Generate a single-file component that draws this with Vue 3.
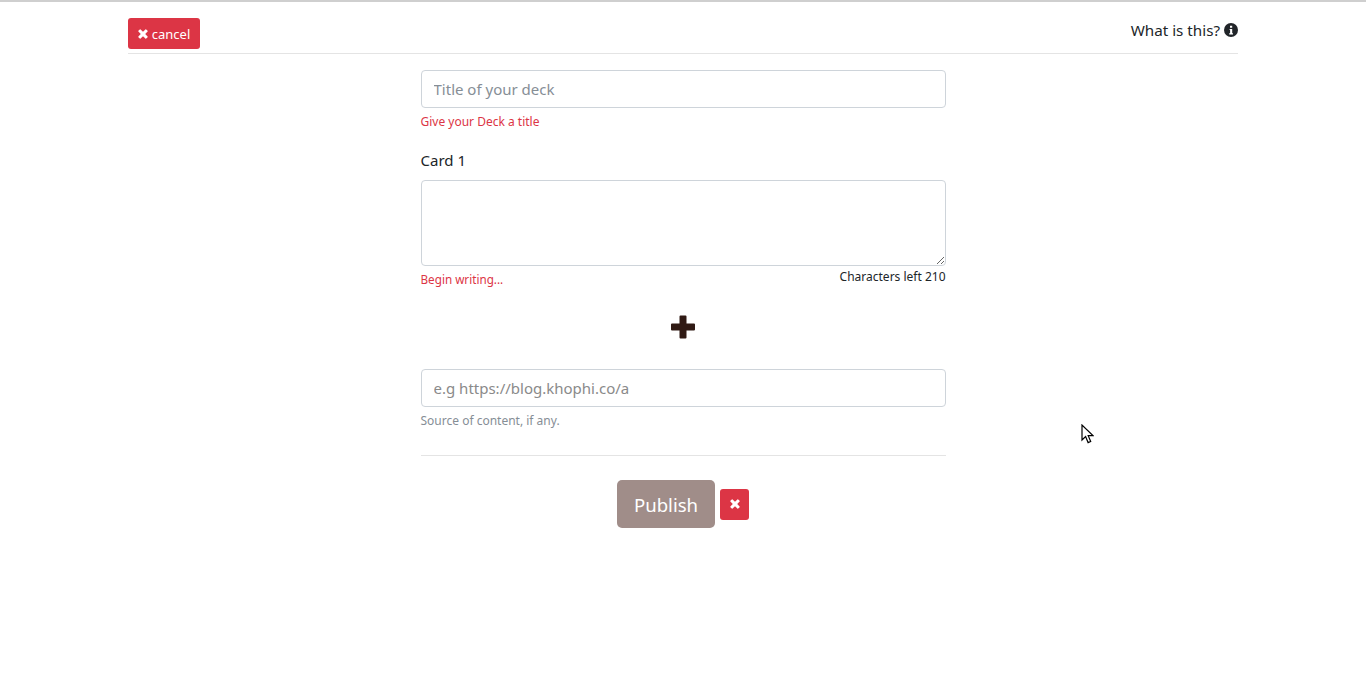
<script setup>
import { ref } from 'vue'

const title = ref('')
const card = ref('')
const source = ref('')
const maxChars = 210
</script>

<template>
  <div class="page">
    <div class="container">
      <header class="topbar">
        <button class="btn-cancel">
          <svg class="fa-x" viewBox="0 0 10 10"><path d="M2.600.4 5 2.800 7.400.4q.4-.4.800 0l1.400 1.400q.4.400 0 .8L7.200 5l2.400 2.400q.4.400 0 .8L8.200 9.600q-.4.400-.8 0L5 7.200 2.600 9.600q-.4.400-.8 0L.4 8.200q-.4-.4 0-.8L2.800 5 .4 2.600q-.4-.4 0-.8L1.800.4q.4-.4.800 0z" /></svg>
          cancel
        </button>
        <a class="what">
          What is this?
          <svg class="info" viewBox="0 0 14 14"><circle cx="7" cy="7" r="7" /><path fill="#fff" d="M5.600 5.900h2.600v4.300h.8v1.200H5.200v-1.200h.9V7.100h-.5zM6 2.700h2.200v2H6z" /></svg>
        </a>
      </header>

      <form class="deck-form" @submit.prevent>
        <input v-model="title" class="control" placeholder="Title of your deck" />
        <small class="error title-error">Give your Deck a title</small>

        <label class="card-label">Card 1</label>
        <textarea v-model="card" class="control card-text"></textarea>
        <div class="card-meta">
          <small class="error begin">Begin writing...</small>
          <small class="left">Characters left {{ maxChars - card.length }}</small>
        </div>

        <div class="add-row">
          <svg class="plus" viewBox="0 0 26 24"><path d="M9.500 1.500a1 1 0 0 1 1-1h5a1 1 0 0 1 1 1V8.500h7.500a1 1 0 0 1 1 1v5a1 1 0 0 1-1 1h-7.500v7a1 1 0 0 1-1 1h-5a1 1 0 0 1-1-1v-7H2a1 1 0 0 1-1-1v-5a1 1 0 0 1 1-1h7.500z" /></svg>
        </div>

        <input v-model="source" class="control source" placeholder="e.g https://blog.khophi.co/a" />
        <small class="hint">Source of content, if any.</small>

        <hr class="rule" />

        <div class="actions">
          <button class="btn-publish">Publish</button>
          <button class="btn-clear">
            <svg class="fa-x" viewBox="0 0 10 10"><path d="M2.600.4 5 2.800 7.400.4q.4-.4.800 0l1.400 1.400q.4.400 0 .8L7.200 5l2.400 2.400q.4.400 0 .8L8.200 9.600q-.4.400-.8 0L5 7.200 2.600 9.600q-.4.400-.8 0L.4 8.200q-.4-.4 0-.8L2.800 5 .4 2.600q-.4-.4 0-.8L1.800.4q.4-.4.800 0z" /></svg>
          </button>
        </div>
      </form>
    </div>

    <svg class="cursor" viewBox="0 0 13 20"><path d="M1 1v15l3.600-3.400 2.500 6 2.600-1.100-2.500-5.800h5z" /></svg>
  </div>
</template>

<style>
html, body {
  margin: 0;
  background: #fff;
}
</style>

<style scoped>
.page {
  position: relative;
  height: 679px;
  overflow: hidden;
  border-top: 2px solid #cfcfcf;
  box-sizing: border-box;
  font-family: "Noto Sans", "Open Sans", sans-serif;
  color: #212529;
}

.container {
  width: 1110px;
  margin: 0 auto;
}

.topbar {
  display: flex;
  justify-content: space-between;
  align-items: flex-start;
  height: 35px;
  padding-top: 16px;
  border-bottom: 1px solid #e4e4e4;
}

.btn-cancel {
  display: flex;
  align-items: center;
  justify-content: center;
  gap: 4px;
  width: 72px;
  height: 31px;
  padding: 0;
  border: none;
  border-radius: 3px;
  background: #dc3545;
  color: #fff;
  font: inherit;
  font-size: 13px;
}

.fa-x {
  width: 10px;
  height: 10px;
  fill: #fff;
}

.what {
  display: flex;
  align-items: center;
  gap: 4px;
  height: 24px;
  font-size: 15.2px;
}

.info {
  width: 14px;
  height: 14px;
  fill: #212529;
}

.deck-form {
  display: flex;
  flex-direction: column;
  width: 525px;
  margin: 16px auto 0;
}

.control {
  box-sizing: border-box;
  width: 100%;
  height: 38px;
  padding: 6px 12px;
  border: 1px solid #ced4da;
  border-radius: 4px;
  background: #fff;
  color: #495057;
  font: inherit;
  font-size: 15px;
  outline: none;
}

.control::placeholder {
  color: #868e96;
  opacity: 1;
}

.source::placeholder {
  color: #8a8a8a;
}

.error {
  color: #dc3545;
  font-size: 12px;
  line-height: 18px;
}

.title-error {
  margin-top: 5px;
}

.card-label {
  margin-top: 18px;
  font-size: 15px;
  line-height: 22px;
}

.card-text {
  display: block;
  height: 86px;
  margin-top: 9px;
}

.card-meta {
  display: flex;
  justify-content: space-between;
  align-items: flex-start;
  height: 22px;
}

.card-meta .begin {
  margin-top: 4px;
  font-size: 11.7px;
}

.left {
  margin-top: 1px;
  font-size: 12px;
  line-height: 20px;
  color: #212529;
}

.add-row {
  display: flex;
  justify-content: center;
  margin-top: 27px;
}

.plus {
  width: 26px;
  height: 24px;
  fill: #301a14;
}

.source {
  margin-top: 30px;
}

.hint {
  margin-top: 5px;
  color: #868e96;
  font-size: 12px;
  line-height: 18px;
}

.rule {
  width: 100%;
  margin: 25px 0 0;
  border: none;
  border-top: 1px solid #e4e4e4;
}

.actions {
  display: flex;
  justify-content: center;
  align-items: center;
  gap: 5px;
  margin-top: 24px;
}

.btn-publish {
  width: 98px;
  height: 48px;
  padding: 0;
  border: none;
  border-radius: 5px;
  background: #a08d89;
  color: #fff;
  font: inherit;
  font-size: 18.6px;
}

.btn-clear {
  display: flex;
  align-items: center;
  justify-content: center;
  width: 29px;
  height: 31px;
  padding: 0;
  border: none;
  border-radius: 3px;
  background: #dc3545;
}

.cursor {
  position: absolute;
  left: 1081px;
  top: 422px;
  width: 13px;
  height: 20px;
  fill: #fff;
  stroke: #000;
  stroke-width: 1.2;
}
</style>
